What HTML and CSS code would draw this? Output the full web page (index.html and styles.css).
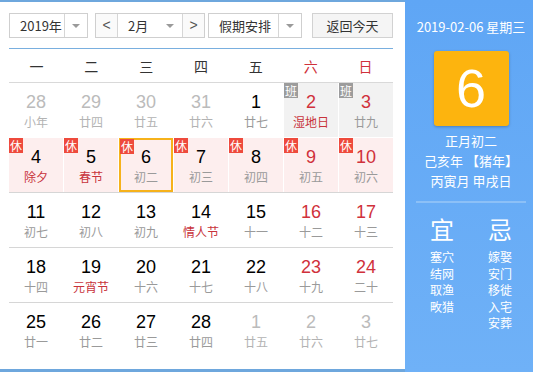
FILE: index.html
```html
<!DOCTYPE html>
<html lang="zh">
<head>
<meta charset="utf-8">
<title>万年历</title>
<link rel="stylesheet" href="styles.css">
</head>
<body>
<div class="cal">
  <div class="main">
    <div class="toolbar">
      <div class="sel year"><span class="val">2019年</span><span class="drop"><i class="arr"></i></span></div>
      <div class="month">
        <span class="nav">&lt;</span>
        <span class="mval">2月</span>
        <span class="drop m"><i class="arr"></i></span>
        <span class="nav">&gt;</span>
      </div>
      <div class="sel hol"><span class="val">假期安排</span><span class="drop"><i class="arr"></i></span></div>
      <button class="today">返回今天</button>
    </div>
    <div class="week">
      <span>一</span><span>二</span><span>三</span><span>四</span><span>五</span><span class="we">六</span><span class="we">日</span>
    </div>
    <div class="rows">
      <div class="row">
        <div class="cell other"><b>28</b><em>小年</em></div>
        <div class="cell other"><b>29</b><em>廿四</em></div>
        <div class="cell other"><b>30</b><em>廿五</em></div>
        <div class="cell other"><b>31</b><em>廿六</em></div>
        <div class="cell"><b>1</b><em>廿七</em></div>
        <div class="cell work"><span class="tag ban">班</span><b class="red">2</b><em class="fest">湿地日</em></div>
        <div class="cell work"><span class="tag ban">班</span><b class="red">3</b><em>廿九</em></div>
      </div>
      <div class="row rest">
        <div class="cell"><span class="tag xiu">休</span><b>4</b><em class="fest">除夕</em></div>
        <div class="cell"><span class="tag xiu">休</span><b>5</b><em class="fest">春节</em></div>
        <div class="cell sel-day"><span class="tag xiu">休</span><b>6</b><em>初二</em></div>
        <div class="cell"><span class="tag xiu">休</span><b>7</b><em>初三</em></div>
        <div class="cell"><span class="tag xiu">休</span><b>8</b><em>初四</em></div>
        <div class="cell"><span class="tag xiu">休</span><b class="red">9</b><em>初五</em></div>
        <div class="cell"><span class="tag xiu">休</span><b class="red">10</b><em>初六</em></div>
      </div>
      <div class="row">
        <div class="cell"><b>11</b><em>初七</em></div>
        <div class="cell"><b>12</b><em>初八</em></div>
        <div class="cell"><b>13</b><em>初九</em></div>
        <div class="cell"><b>14</b><em class="fest">情人节</em></div>
        <div class="cell"><b>15</b><em>十一</em></div>
        <div class="cell"><b class="red">16</b><em>十二</em></div>
        <div class="cell"><b class="red">17</b><em>十三</em></div>
      </div>
      <div class="row">
        <div class="cell"><b>18</b><em>十四</em></div>
        <div class="cell"><b>19</b><em class="fest">元宵节</em></div>
        <div class="cell"><b>20</b><em>十六</em></div>
        <div class="cell"><b>21</b><em>十七</em></div>
        <div class="cell"><b>22</b><em>十八</em></div>
        <div class="cell"><b class="red">23</b><em>十九</em></div>
        <div class="cell"><b class="red">24</b><em>二十</em></div>
      </div>
      <div class="row last">
        <div class="cell"><b>25</b><em>廿一</em></div>
        <div class="cell"><b>26</b><em>廿二</em></div>
        <div class="cell"><b>27</b><em>廿三</em></div>
        <div class="cell"><b>28</b><em>廿四</em></div>
        <div class="cell other"><b>1</b><em>廿五</em></div>
        <div class="cell other"><b>2</b><em>廿六</em></div>
        <div class="cell other"><b>3</b><em>廿七</em></div>
      </div>
    </div>
  </div>
  <div class="side">
    <div class="date">2019-02-06 星期三</div>
    <div class="big">6</div>
    <div class="lunar">
      <div>正月初二</div>
      <div>己亥年 【猪年】</div>
      <div>丙寅月 甲戌日</div>
    </div>
    <div class="divider"></div>
    <div class="yiji">
      <div class="col">
        <div class="head">宜</div>
        <div>塞穴</div><div>结网</div><div>取渔</div><div>畋猎</div>
      </div>
      <div class="col">
        <div class="head">忌</div>
        <div>嫁娶</div><div>安门</div><div>移徙</div><div>入宅</div><div>安葬</div>
      </div>
    </div>
  </div>
</div>
</body>
</html>
```

FILE: styles.css
```css
* { box-sizing: border-box; }
html, body { margin: 0; padding: 0; background: #fff; }
body {
  font-family: "Liberation Sans", "Noto Sans CJK SC", sans-serif;
  width: 533px;
  height: 372px;
  overflow: hidden;
}
.cal {
  display: flex;
  height: 372px;
}
.main {
  width: 405px;
  height: 372px;
  border-top: 2px solid #6ea7dd;
  border-bottom: 3px solid #6ea7dd;
  padding: 11px 12px 0 9px;
}
.toolbar {
  display: flex;
  height: 25px;
  font-family: "Noto Sans CJK SC", sans-serif;
  font-size: 13px;
  color: #333;
}
.sel, .month {
  display: flex;
  align-items: center;
  border: 1px solid #cfcfcf;
  background: #fff;
  height: 25px;
}
.year { width: 79px; }
.year .val { width: 54px; padding-left: 10px; }
.drop {
  height: 100%;
  flex: 1;
  display: flex;
  align-items: center;
  justify-content: center;
  border-left: 1px solid #d6d6d6;
}
.arr {
  width: 0; height: 0;
  border-left: 4px solid transparent;
  border-right: 4px solid transparent;
  border-top: 4px solid #9a9a9a;
}
.month { width: 110px; margin-left: 7px; }
.nav {
  width: 22px;
  text-align: center;
  font-family: "Liberation Sans", sans-serif;
  font-size: 14px;
  color: #555;
  height: 100%;
  line-height: 22px;
  background: #fafafa;
}
.nav:first-child { border-right: 1px solid #d6d6d6; }
.nav:last-child { border-left: 1px solid #d6d6d6; }
.mval { width: 40px; padding-left: 10px; }
.drop.m { border-left: none; flex: 1; }
.hol { width: 94px; margin-left: 3px; }
.hol .val { width: 69px; padding-left: 10px; }
.today {
  margin-left: 10px;
  width: 81px;
  height: 25px;
  border: 1px solid #d2d2d2;
  background: #f5f5f5;
  font-family: "Noto Sans CJK SC", sans-serif;
  font-size: 13px;
  color: #333;
  padding: 0;
}
.week {
  margin-top: 10px;
  border-top: 1px solid #79afdf;
  border-bottom: 1px solid #d9d9d9;
  height: 35px;
  display: grid;
  grid-template-columns: repeat(7, 1fr);
  align-items: center;
  font-family: "Noto Sans CJK SC", sans-serif;
  font-size: 14px;
  color: #333;
  text-align: center;
}
.week .we { color: #d0313b; }
.row {
  display: grid;
  grid-template-columns: repeat(7, 1fr);
  column-gap: 1px;
  height: 55px;
  border-bottom: 1px solid #d6d6d6;
}
.row.last { border-bottom: none; }
.rows .row:first-child { border-bottom-color: #fff; }
.cell {
  position: relative;
  display: flex;
  flex-direction: column;
  align-items: center;
  padding-top: 8px;
}
.cell b {
  font-weight: normal;
  font-size: 18px;
  line-height: 22px;
  color: #000;
}
.cell em {
  font-style: normal;
  font-family: "Noto Sans CJK SC", sans-serif;
  font-size: 12px;
  line-height: 18px;
  color: #9a9a9a;
}
.cell b.red { color: #d0313b; }
.cell em.fest { color: #c8333b; }
.cell.other b { color: #bbb; }
.cell.other em { color: #b3b3b3; }
.cell.work { background: #f2f2f2; }
.rest .cell { background: #fdeeee; }
.cell.sel-day { border: 2px solid #f6b21b; padding-top: 6px; }
.tag {
  position: absolute;
  left: 0;
  top: 0;
  width: 14px;
  height: 15px;
  font-family: "Noto Sans CJK SC", sans-serif;
  font-size: 12px;
  line-height: 15px;
  text-align: center;
  color: #fff;
}
.sel-day .tag { left: -1px; top: -1px; }
.tag.xiu { background: #ee4a3c; }
.tag.ban { background: #9c9c9c; }
.side {
  width: 128px;
  height: 372px;
  background: linear-gradient(#5fa6f5, #6fb1f7);
  color: #fff;
  font-family: "Noto Sans CJK SC", sans-serif;
  display: flex;
  flex-direction: column;
  align-items: center;
  padding-top: 17px;
}
.date {
  font-size: 13px;
  line-height: 20px;
  padding-left: 4px;
}
.big {
  margin-top: 14px;
  margin-left: 4px;
  width: 75px;
  height: 75px;
  background: #fdb40e;
  border-radius: 3px;
  box-shadow: 0 1px 3px rgba(0,0,0,0.25);
  font-family: "Liberation Sans", sans-serif;
  font-size: 54px;
  line-height: 75px;
  text-align: center;
}
.lunar {
  margin-top: 5px;
  font-size: 13px;
  line-height: 20px;
  text-align: center;
  padding-left: 4px;
}
.divider {
  margin-top: 10px;
  width: 110px;
  height: 2px;
  margin-left: 4px;
  background: #8cc0f7;
}
.yiji {
  display: flex;
  gap: 30px;
  margin-top: 10px;
  margin-left: 4px;
  font-size: 12px;
  line-height: 16.5px;
}
.col { text-align: center; width: 28px; }
.col .head {
  font-size: 24px;
  line-height: 32px;
  margin-bottom: 4px;
}
```
